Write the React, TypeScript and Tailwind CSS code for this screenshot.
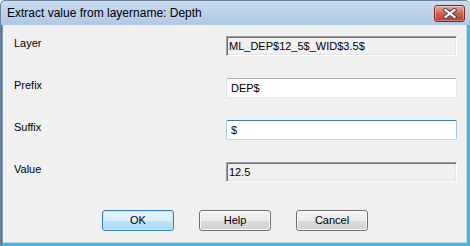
import React from "react";

const font = { fontFamily: '"Liberation Sans", Arial, sans-serif' };

function CloseButton() {
  return (
    <div className="w-[31px] h-[17px] rounded-[3px] border border-[#7a2a22] bg-gradient-to-b from-[#e9a99c] via-[#d2604f] to-[#c0392b] flex items-center justify-center shadow-[inset_0_0_0_1px_rgba(255,255,255,0.35)]">
      <svg width="14" height="11" viewBox="0 0 14 11">
        <path d="M2.5 2 L11.5 9 M11.5 2 L2.5 9" stroke="#4a4a4a" strokeWidth="4.2" strokeLinecap="square" />
        <path d="M2.5 2 L11.5 9 M11.5 2 L2.5 9" stroke="#ffffff" strokeWidth="2.2" strokeLinecap="square" />
      </svg>
    </div>
  );
}

function Row({ label, children, first }: { label: string; children: React.ReactNode; first?: boolean }) {
  return (
    <div className={`flex items-start ${first ? "" : "mt-[22px]"}`}>
      <div className="flex-1 text-[11px] leading-[14px] text-black pl-[0px]">{label}</div>
      {children}
    </div>
  );
}

function ReadOnlyField({ value }: { value: string }) {
  return (
    <div className="w-[231px] h-[20px] border border-t-[#a0a0a0] border-l-[#a0a0a0] border-b-white border-r-white shadow-[inset_1px_1px_0_#6d6d6d,inset_-1px_-1px_0_#e3e3e3] bg-[#f0f0f0] flex items-center pl-[2px] text-[11px] text-black">
      {value}
    </div>
  );
}

function EditField({ value, focused }: { value: string; focused?: boolean }) {
  return (
    <div
      className={`w-[231px] h-[20px] border rounded-[2px] bg-white flex items-center pl-[4px] text-[11px] text-black ${
        focused
          ? "border-t-[#3d7bad] border-l-[#a4c9e3] border-r-[#a4c9e3] border-b-[#b7d3ea]"
          : "border-t-[#abadb3] border-l-[#e2e3ea] border-r-[#e2e3ea] border-b-[#e3e9ef]"
      }`}
    >
      {value}
    </div>
  );
}

function Button({ label, def }: { label: string; def?: boolean }) {
  return (
    <div
      className={`w-[72px] h-[21px] rounded-[3px] border flex items-center justify-center text-[11px] text-black ${
        def
          ? "border-[#3c7fb1] bg-[linear-gradient(to_bottom,#e5f4fc_0%,#d6eefc_50%,#bde4fb_50%,#a9daf6_100%)] shadow-[inset_0_0_0_1px_#c4e5f6]"
          : "border-[#707070] bg-[linear-gradient(to_bottom,#f2f2f2_0%,#ebebeb_50%,#dddddd_50%,#cfcfcf_100%)] shadow-[inset_0_0_0_1px_#fcfcfc]"
      }`}
    >
      {label}
    </div>
  );
}

export default function App() {
  return (
    <div className="w-[470px] h-[246px] overflow-hidden" style={font}>
      <div className="w-[470px] h-[246px] flex flex-col bg-[#b4cbe6] border-l border-t border-[#6f8298] rounded-t-[5px]">
        {/* Title bar */}
        <div className="h-[24px] flex items-start bg-gradient-to-b from-[#c9dbef] to-[#afc8e5] rounded-t-[5px]">
          <div className="pl-[6px] pt-[5px] text-[12px] leading-[15px] text-black flex-1">
            Extract value from layername: Depth
          </div>
          <div className="pt-[4px] pr-[5px]">
            <CloseButton />
          </div>
        </div>
        {/* Body with side frame */}
        <div className="flex-1 flex">
          <div className="w-[2px] bg-[linear-gradient(to_right,#3f5f85,#8fb0d6)]" />
          <div className="flex-1 flex flex-col">
            <div className="flex-1 bg-[#f0f0f0] border-r border-b border-[#c9d3dd] pt-[11px] pl-[11px] pr-[9px]">
              <Row label="Layer" first>
                <ReadOnlyField value="ML_DEP$12_5$_WID$3.5$" />
              </Row>
              <div className="mt-[1px]" />
              <Row label="Prefix">
                <EditField value="DEP$" />
              </Row>
              <Row label="Suffix">
                <EditField value="$" focused />
              </Row>
              <Row label="Value">
                <ReadOnlyField value="12.5" />
              </Row>
              <div className="flex justify-center gap-[25px] mt-[28px] pr-[1px]">
                <Button label="OK" def />
                <Button label="Help" />
                <Button label="Cancel" />
              </div>
            </div>
            <div className="h-[3px] bg-[#3bbbe6]" />
          </div>
          <div className="w-[3px] bg-[#3bbbe6]" />
        </div>
      </div>
    </div>
  );
}
